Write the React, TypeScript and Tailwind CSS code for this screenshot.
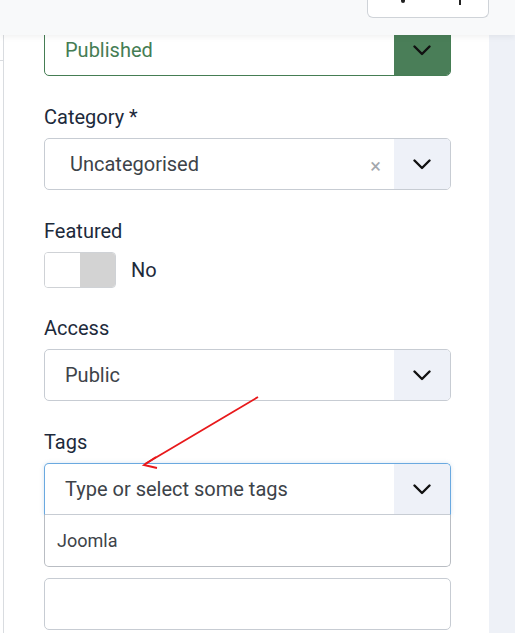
import React from 'react'

function Chevron() {
  return (
    <svg width="18" height="11" viewBox="0 0 18 11" fill="none">
      <polyline points="1.5,1.5 9,9 16.5,1.5" stroke="#111" strokeWidth="2.4" strokeLinecap="round" strokeLinejoin="round" />
    </svg>
  )
}

function Label({ children }: { children: React.ReactNode }) {
  return <div className="mb-[7px] text-[20px] leading-[27px] text-[#1d2a3b]">{children}</div>
}

function Select({ value, clear }: { value: string; clear?: boolean }) {
  return (
    <div className="flex h-[52px] overflow-hidden rounded-[5px] border border-[#c7ccd3] bg-white">
      <div className={`flex flex-1 items-center text-[20px] text-[#3d4349] ${clear ? 'pl-[25px]' : 'pl-[20px]'}`}>{value}</div>
      {clear && <div className="flex items-center pr-[13px] pt-[3px] text-[20px] text-[#a3a7ad]">×</div>}
      <div className="flex w-[56px] items-center justify-center bg-[#eef1f8]">
        <Chevron />
      </div>
    </div>
  )
}

export default function App() {
  return (
    <div className="relative h-[633px] w-[515px] overflow-hidden bg-white font-['Roboto',sans-serif]">
      {/* top toolbar over the form */}
      <div className="absolute inset-x-0 top-0 z-10 flex h-[35px] justify-end bg-[#f8f9fa] pr-[26px] shadow-[0_2px_6px_rgba(0,0,0,0.06)]">
        <div className="flex h-[18px] w-[122px] items-start gap-[54px] rounded-b-[6px] border border-t-0 border-[#cfd3d8] bg-white pl-[33px]">
          <div className="h-[3px] w-[4px] rounded-b-full bg-[#222]" />
          <div className="h-[5px] w-[2px] bg-[#222]" />
        </div>
      </div>

      <div className="flex h-full">
        <div className="w-[4px] border-r border-[#d9dce0] bg-white pt-[60px]">
          <div className="border-t border-[#d9dce0]" />
        </div>

        <div className="flex-1 pl-[40px] pr-[38px] pt-[24px]">
          {/* status */}
          <div className="mb-7 flex h-[52px] overflow-hidden rounded-[5px] border border-[#457d54] bg-white">
            <div className="flex flex-1 items-center pl-[20px] text-[20px] text-[#457d54]">Published</div>
            <div className="flex w-[56px] items-center justify-center bg-[#4a7e58]">
              <Chevron />
            </div>
          </div>

          <Label>Category *</Label>
          <div className="mb-7">
            <Select value="Uncategorised" clear />
          </div>

          <Label>Featured</Label>
          <div className="mb-[27px] flex h-[36px] items-center">
            <div className="flex h-[36px] w-[72px] overflow-hidden rounded-[4px] border border-[#cfd2d6]">
              <div className="flex-1 bg-white" />
              <div className="flex-1 bg-[#d3d3d3]" />
            </div>
            <span className="ml-[15px] text-[20px] text-[#1d2a3b]">No</span>
          </div>

          <Label>Access</Label>
          <div className="mb-7">
            <Select value="Public" />
          </div>

          <Label>Tags</Label>
          <div className="flex h-[52px] overflow-hidden rounded-t-[5px] border border-[#6aa9e0] border-b-[#c7ccd3] bg-white shadow-[0_0_4px_rgba(100,150,200,0.25)]">
            <div className="flex flex-1 items-center pl-[20px] text-[20px] text-[#3d4349]">Type or select some tags</div>
            <div className="flex w-[56px] items-center justify-center bg-[#eef1f8]">
              <Chevron />
            </div>
          </div>
          <div className="mb-[11px] flex h-[52px] items-center rounded-b-[5px] border border-t-0 border-[#b9bdc3] bg-white pl-[12px] text-[18px] text-[#3d4349]">
            Joomla
          </div>
          <div className="h-[52px] rounded-[5px] border border-[#c7ccd3] bg-white" />
        </div>

        <div className="w-[26px] bg-[#eef1f7]" />
      </div>

      {/* annotation arrow */}
      <svg className="pointer-events-none absolute left-0 top-0 z-20" width="515" height="633">
        <line x1="258" y1="397" x2="145" y2="464" stroke="#e8191b" strokeWidth="1.8" />
        <polyline points="156,457 144,465 157,468" fill="none" stroke="#e8191b" strokeWidth="1.8" />
      </svg>
    </div>
  )
}
